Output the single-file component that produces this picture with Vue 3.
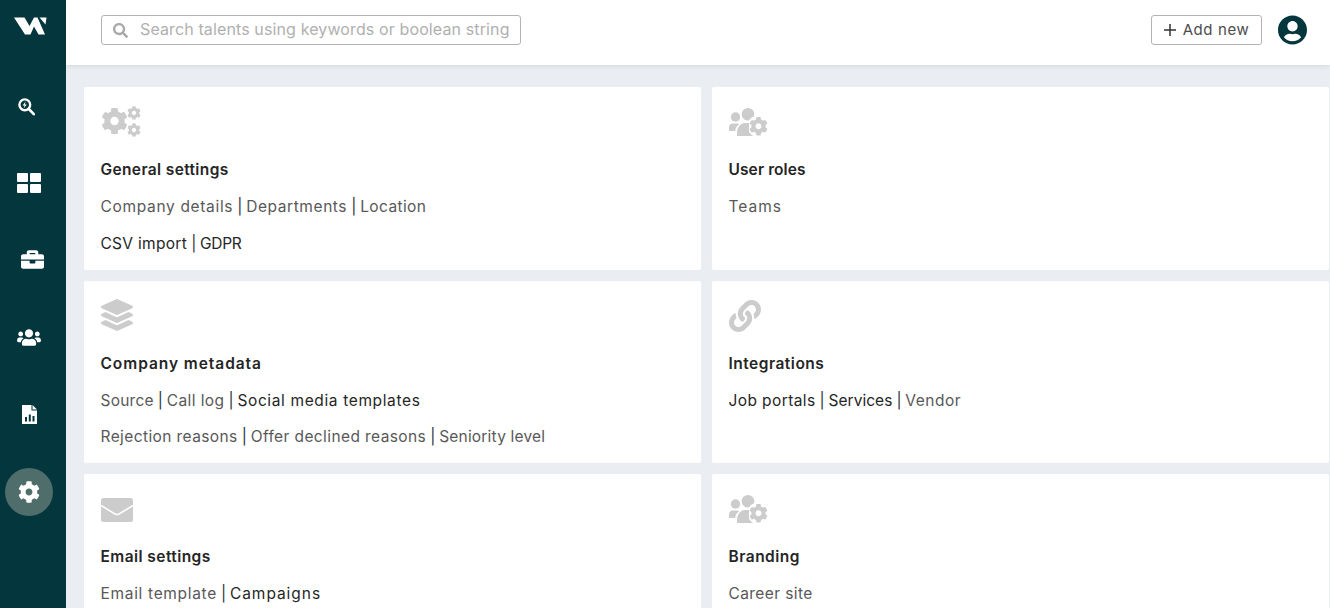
<script setup>
const gear = 'M487.4 315.7l-42.6-24.6c4.3-23.2 4.3-47 0-70.2l42.6-24.6c4.9-2.8 7.1-8.6 5.5-14-11.1-35.6-30-67.8-54.7-94.6-3.8-4.1-10-5.1-14.8-2.3L380.8 110c-17.9-15.4-38.5-27.3-60.8-35.1V25.8c0-5.6-3.9-10.5-9.4-11.7-36.7-8.2-74.3-7.8-109.2 0-5.5 1.2-9.4 6.1-9.4 11.7V75c-22.2 7.9-42.8 19.8-60.8 35.1L88.7 85.5c-4.9-2.8-11-1.9-14.8 2.3-24.7 26.7-43.6 58.9-54.7 94.6-1.7 5.4.6 11.2 5.5 14L67.3 221c-4.3 23.2-4.3 47 0 70.2l-42.6 24.6c-4.9 2.8-7.1 8.6-5.5 14 11.1 35.6 30 67.8 54.7 94.6 3.8 4.1 10 5.1 14.8 2.3l42.6-24.6c17.9 15.4 38.5 27.3 60.8 35.1v49.2c0 5.6 3.9 10.5 9.4 11.7 36.7 8.2 74.3 7.8 109.2 0 5.5-1.2 9.4-6.1 9.4-11.7v-49.2c22.2-7.9 42.8-19.8 60.8-35.1l42.6 24.6c4.9 2.8 11 1.9 14.8-2.3 24.7-26.7 43.6-58.9 54.7-94.6 1.5-5.5-.7-11.3-5.6-14.1zM256 336c-44.1 0-80-35.9-80-80s35.9-80 80-80 80 35.9 80 80-35.9 80-80 80z'
const layers = 'M12.41 148.02l232.94 105.67c6.8 3.09 14.49 3.09 21.29 0l232.94-105.67c16.55-7.51 16.55-32.52 0-40.03L266.65 2.31a25.607 25.607 0 0 0-21.29 0L12.41 107.98c-16.55 7.51-16.55 32.53 0 40.04zm487.18 88.28l-58.09-26.33-161.64 73.27c-7.56 3.43-15.59 5.17-23.86 5.17s-16.29-1.74-23.86-5.17L70.51 209.97l-58.1 26.33c-16.55 7.5-16.55 32.5 0 40l232.94 105.59c6.8 3.08 14.49 3.08 21.29 0L499.59 276.3c16.55-7.5 16.55-32.5 0-40zm0 127.8l-57.87-26.23-161.86 73.37c-7.56 3.43-15.59 5.17-23.86 5.17s-16.29-1.74-23.86-5.17L70.29 337.87 12.41 364.1c-16.55 7.5-16.55 32.5 0 40l232.94 105.59c6.8 3.08 14.49 3.08 21.29 0L499.59 404.1c16.55-7.5 16.55-32.5 0-40z'
const link = 'M326.612 185.391c59.747 59.809 58.927 155.698.36 214.59-.11.12-.24.25-.36.37l-67.2 67.2c-59.27 59.27-155.699 59.262-214.96 0-59.27-59.26-59.27-155.7 0-214.96l37.106-37.106c9.84-9.84 26.786-3.3 27.294 10.606.648 17.722 3.826 35.527 9.69 52.721 1.986 5.822.567 12.262-3.783 16.612l-13.087 13.087c-28.026 28.026-28.905 73.66-1.155 101.96 28.024 28.579 74.086 28.749 102.325.51l67.2-67.19c28.191-28.191 28.073-73.757 0-101.83-3.701-3.694-7.429-6.564-10.341-8.569a16.037 16.037 0 0 1-6.947-12.606c-.396-10.567 3.348-21.456 11.698-29.806l21.054-21.055c5.521-5.521 14.182-6.199 20.584-1.731a152.482 152.482 0 0 1 20.522 17.197zM467.547 44.449c-59.261-59.262-155.69-59.27-214.96 0l-67.2 67.2c-.12.12-.25.25-.36.37-58.566 58.892-59.387 154.781.36 214.59a152.454 152.454 0 0 0 20.521 17.196c6.402 4.468 15.064 3.789 20.584-1.731l21.054-21.055c8.35-8.35 12.094-19.239 11.698-29.806a16.037 16.037 0 0 0-6.947-12.606c-2.912-2.005-6.64-4.875-10.341-8.569-28.073-28.073-28.191-73.639 0-101.83l67.2-67.19c28.239-28.239 74.3-28.069 102.325.51 27.75 28.3 26.872 73.934-1.155 101.96l-13.087 13.087c-4.35 4.35-5.769 10.79-3.783 16.612 5.864 17.194 9.042 34.999 9.69 52.721.509 13.906 17.454 20.446 27.294 10.606l37.106-37.106c59.271-59.259 59.271-155.699.001-214.959z'
const briefcase = 'M320 336c0 8.84-7.16 16-16 16h-96c-8.84 0-16-7.16-16-16v-48H0v144c0 25.6 22.4 48 48 48h416c25.6 0 48-22.4 48-48V288H320v48zm144-208h-80V80c0-25.6-22.4-48-48-48H176c-25.6 0-48 22.4-48 48v48H48c-25.6 0-48 22.4-48 48v80h512v-80c0-25.6-22.4-48-48-48zm-144 0H192V96h128v32z'
const users = 'M96 224c35.3 0 64-28.7 64-64s-28.7-64-64-64-64 28.7-64 64 28.7 64 64 64zm448 0c35.3 0 64-28.7 64-64s-28.7-64-64-64-64 28.7-64 64 28.7 64 64 64zm32 32h-64c-17.6 0-33.5 7.1-45.1 18.6 40.3 22.1 68.9 62 75.1 109.4h66c17.7 0 32-14.3 32-32v-32c0-35.3-28.7-64-64-64zm-256 0c61.9 0 112-50.1 112-112S381.9 32 320 32 208 82.1 208 144s50.1 112 112 112zm76.8 32h-8.3c-20.8 10-43.9 16-68.5 16s-47.6-6-68.5-16h-8.3C179.6 288 128 339.6 128 403.2V432c0 26.5 21.5 48 48 48h288c26.5 0 48-21.5 48-48v-28.8c0-63.6-51.6-115.2-115.2-115.2zm-223.7-13.4C161.5 263.1 145.6 256 128 256H64c-35.3 0-64 28.7-64 64v32c0 17.7 14.3 32 32 32h65.9c6.3-47.4 34.9-87.3 75.2-109.4z'
const search = 'M505 442.7L405.3 343c-4.5-4.5-10.6-7-17-7H372c27.6-35.3 44-79.7 44-128C416 93.1 322.9 0 208 0S0 93.1 0 208s93.1 208 208 208c48.3 0 92.7-16.4 128-44v16.3c0 6.4 2.5 12.5 7 17l99.7 99.7c9.4 9.4 24.6 9.4 33.9 0l28.3-28.3c9.4-9.4 9.4-24.6.1-34zM208 336c-70.7 0-128-57.2-128-128 0-70.7 57.2-128 128-128 70.7 0 128 57.2 128 128 0 70.7-57.2 128-128 128z'
const userCircle = 'M248 8C111 8 0 119 0 256s111 248 248 248 248-111 248-248S385 8 248 8zm0 96c48.6 0 88 39.4 88 88s-39.4 88-88 88-88-39.4-88-88 39.4-88 88-88zm0 344c-58.7 0-111.3-26.6-146.5-68.2 18.8-35.4 55.6-59.8 98.5-59.8 2.4 0 4.8.4 7.1 1.1 13 4.2 26.6 6.9 40.9 6.9 14.3 0 28-2.7 40.9-6.9 2.3-.7 4.7-1.1 7.1-1.1 42.9 0 79.7 24.4 98.5 59.8C359.3 421.4 306.7 448 248 448z'

// entry: [label, isDark, letterSpacing in px]
const cards = [
  { icon: 'cogs', title: 'General settings', ls: 0.37, lines: [
    [['Company details', 0, 0.67], ['Departments', 0, 0.58], ['Location', 0, 0.4]],
    [['CSV import', 1, 0.3], ['GDPR', 1, -0.35]] ] },
  { icon: 'usercog', title: 'User roles', ls: 0.1, lines: [[['Teams', 0, 1]]] },
  { icon: 'layers', title: 'Company metadata', ls: 0.94, lines: [
    [['Source', 0, 0.23], ['Call log', 0, 0.4], ['Social media templates', 1, 0.63]],
    [['Rejection reasons', 0, 0.4], ['Offer declined reasons', 0, 0.4], ['Seniority level', 0, 0.2]] ] },
  { icon: 'link', title: 'Integrations', ls: 0.5, lines: [[['Job portals', 1, 0.4], ['Services', 1, 0.03], ['Vendor', 0, 0.5]]] },
  { icon: 'mail', title: 'Email settings', ls: 0.43, lines: [[['Email template', 0, 0.68], ['Campaigns', 1, 0.95]]] },
  { icon: 'usercog', title: 'Branding', ls: 0.5, lines: [[['Career site', 0, 0.4]]] }
]
</script>

<template>
  <div class="app">
    <aside class="rail">
      <div class="logo">
        <svg width="33" height="18" viewBox="0 0 33 18"><path fill="#fff" d="M0 .5h10.500l5 8.500L20 .5h3.500L31 17.500h-6.500L20 9.500l-3.500 8h-5.500z"/><path fill="#fff" d="M25.500.5H32.500L31.500 7.500z"/></svg>
      </div>
      <nav class="nav">
        <a class="item i-search">
          <svg width="17" height="18" viewBox="0 0 17 18"><circle cx="6.800" cy="6.800" r="5.400" fill="none" stroke="#fff" stroke-width="2.400"/><path d="M10.800 11l5 5.200" stroke="#fff" stroke-width="2.600" stroke-linecap="round"/><path fill="#fff" d="M7.800 3.200 4.600 7.400h2l-1 3.200 3.200-4.200h-2z"/></svg>
        </a>
        <a class="item i-grid">
          <span class="tiles"><i></i><i></i><i></i><i></i></span>
        </a>
        <a class="item i-brief">
          <svg width="23" height="21" viewBox="0 0 512 512" preserveAspectRatio="none"><path fill="#fff" :d="briefcase"/></svg>
        </a>
        <a class="item">
          <svg width="24" height="19" viewBox="0 0 640 512"><path fill="#fff" :d="users"/></svg>
        </a>
        <a class="item">
          <svg width="15" height="19" viewBox="0 0 15 19"><path fill="#fff" fill-rule="evenodd" d="M0 0h9.500v5.500H15V19H0zM3 12h2v4.500H3zM6.800 9.500h2v7h-2zM10.500 11h2v5.500h-2z"/><path fill="#fff" d="M10.500 0 15 4.500h-4.500z"/></svg>
        </a>
        <a class="item active">
          <svg width="22" height="22" viewBox="0 0 512 512"><path fill="#fff" :d="gear"/></svg>
        </a>
      </nav>
    </aside>

    <div class="body">
      <header class="top">
        <div class="searchbox">
          <svg width="15" height="15" viewBox="0 0 512 512"><path fill="#a9a9a9" :d="search"/></svg>
          <span class="placeholder">Search talents using keywords or boolean string</span>
        </div>
        <div class="actions">
          <button class="add" type="button">
            <svg width="12" height="12" viewBox="0 0 12 12"><path d="M6 0v12M0 6h12" stroke="#333" stroke-width="1.500"/></svg>
            <span>Add new</span>
          </button>
          <svg class="avatar" width="29" height="30" viewBox="0 0 496 512"><path fill="#04363d" :d="userCircle"/></svg>
        </div>
      </header>

      <main class="grid">
        <section v-for="card in cards" :key="card.title" class="card">
          <div class="icon" :class="'icon-' + card.icon">
            <svg v-if="card.icon === 'cogs'" width="40" height="32" viewBox="0 0 40 32">
              <svg x="0" y="1.500" width="27" height="27" viewBox="0 0 512 512"><path fill="#ccc" :d="gear"/></svg>
              <svg x="26" y="0" width="14" height="14" viewBox="0 0 512 512"><path fill="#ccc" :d="gear"/></svg>
              <svg x="26" y="17" width="14" height="14" viewBox="0 0 512 512"><path fill="#ccc" :d="gear"/></svg>
            </svg>
            <svg v-else-if="card.icon === 'usercog'" width="40" height="31" viewBox="0 0 40 31">
              <circle cx="6.500" cy="11" r="4.700" fill="#ccc"/>
              <circle cx="19" cy="8.200" r="6.300" fill="#ccc"/>
              <path fill="#ccc" d="M0 25v-3.500c0-2.800 1.800-4 3.500-4H8c.8 0 1.600.2 2.200.8C8 19.800 6.500 22 6.200 25zM8 30v-3c0-5.500 3.500-10 8-10h4c1 0 2 .2 2.800.5-.8 3-.2 10 2.200 12.500z"/>
              <svg x="20" y="10.500" width="19" height="19.500" viewBox="0 0 512 512"><circle cx="256" cy="256" r="300" fill="#fff"/><path fill="#ccc" :d="gear"/></svg>
            </svg>
            <svg v-else-if="card.icon === 'layers'" width="32" height="32" viewBox="0 0 512 512"><path fill="#ccc" :d="layers"/></svg>
            <svg v-else-if="card.icon === 'link'" width="32" height="32" viewBox="0 0 512 512"><path fill="#ccc" :d="link"/></svg>
            <svg v-else width="32" height="24" viewBox="0 0 32 24"><rect width="32" height="24" rx="2.500" fill="#ccc"/><path d="M0 7.500l14 8.500c1.300.7 2.700.7 4 0l14-8.500" fill="none" stroke="#fff" stroke-width="1.500"/></svg>
          </div>
          <h3 class="title" :style="{ letterSpacing: card.ls + 'px' }">{{ card.title }}</h3>
          <p v-for="(line, i) in card.lines" :key="i" class="line">
            <template v-for="(entry, j) in line" :key="j"><span v-if="j" class="sep"> | </span><a :class="{ strong: entry[1] }" :style="{ letterSpacing: entry[2] + 'px' }">{{ entry[0] }}</a></template>
          </p>
        </section>
      </main>
    </div>
  </div>
</template>

<style scoped>
.app {
  display: flex;
  height: 100vh;
  overflow: hidden;
  font-family: Inter, "Liberation Sans", sans-serif;
  background: #eaedf2;
}
.rail {
  width: 66px;
  flex: none;
  background: #04363d;
  display: flex;
  flex-direction: column;
}
.logo {
  height: 68px;
  padding: 17px 0 0 14px;
  box-sizing: border-box;
  line-height: 0;
}
.nav {
  display: flex;
  flex-direction: column;
}
.item {
  height: 77px;
  width: 58px;
  display: flex;
  align-items: center;
  justify-content: center;
}
.item.i-search { padding-right: 6px; box-sizing: border-box; }
.item.i-grid { padding-bottom: 2px; box-sizing: border-box; }
.item.i-brief { padding-left: 7px; padding-bottom: 2px; box-sizing: border-box; }
.item.active { position: relative; z-index: 0; }
.item.active::before {
  content: "";
  position: absolute;
  z-index: -1;
  left: 5px;
  top: 14.500px;
  width: 48px;
  height: 48px;
  border-radius: 50%;
  background: #4f6d6a;
}
.tiles {
  display: grid;
  grid-template-columns: 11px 11px;
  grid-template-rows: 9px 9px;
  gap: 2px;
}
.tiles i {
  display: block;
  background: #fff;
  border-radius: 1px;
}
.body {
  flex: 1;
  min-width: 0;
  display: flex;
  flex-direction: column;
}
.top {
  height: 65px;
  flex: none;
  box-sizing: border-box;
  background: #fff;
  box-shadow: 0 1px 5px rgba(0, 0, 0, 0.1);
  display: flex;
  align-items: flex-start;
  justify-content: space-between;
  padding: 15px 23px 0 35px;
  position: relative;
}
.searchbox {
  width: 420px;
  height: 30px;
  box-sizing: border-box;
  border: 1px solid #b4b4b4;
  border-radius: 3px;
  display: flex;
  align-items: center;
  padding-left: 11px;
  gap: 12px;
}
.placeholder {
  color: #b0b0b0;
  font-size: 16px;
  letter-spacing: 0.12px;
  white-space: nowrap;
  padding-bottom: 2px;
}
.actions {
  display: flex;
  align-items: flex-start;
  gap: 16px;
}
.add {
  width: 111px;
  height: 30px;
  box-sizing: border-box;
  border: 1px solid #b4b4b4;
  border-radius: 3px;
  background: #fff;
  display: flex;
  align-items: center;
  justify-content: center;
  gap: 7px;
  padding: 0;
  font: inherit;
  font-size: 15px;
  color: #4d4d4d;
  letter-spacing: 0.6px;
}
.add span { padding-bottom: 1px; }
.avatar { display: block; }
.grid {
  flex: 1;
  display: grid;
  grid-template-columns: 617px 617px;
  grid-auto-rows: min-content;
  gap: 11px;
  padding: 22px 0 0 18px;
  overflow: hidden;
}
.card {
  background: #fff;
  border-radius: 2px;
  height: 182.500px;
  box-sizing: border-box;
  padding: 0 16.500px;
}
.icon {
  height: 70px;
  box-sizing: border-box;
  padding-top: 19px;
  line-height: 0;
}
.icon-layers { padding-top: 18.500px; }
.icon-mail { padding-top: 24px; }
.title {
  margin: 0;
  font-size: 15.500px;
  line-height: 26px;
  font-weight: 600;
  color: #252525;
}
.line {
  margin: 0;
  font-size: 15.500px;
  line-height: 36.500px;
  color: #555;
  white-space: nowrap;
}
.line:first-of-type { margin-top: 6px; }
.line a { color: #585858; }
.line a.strong { color: #262626; }
.sep { color: #26323a; letter-spacing: -0.3px; }
</style>
